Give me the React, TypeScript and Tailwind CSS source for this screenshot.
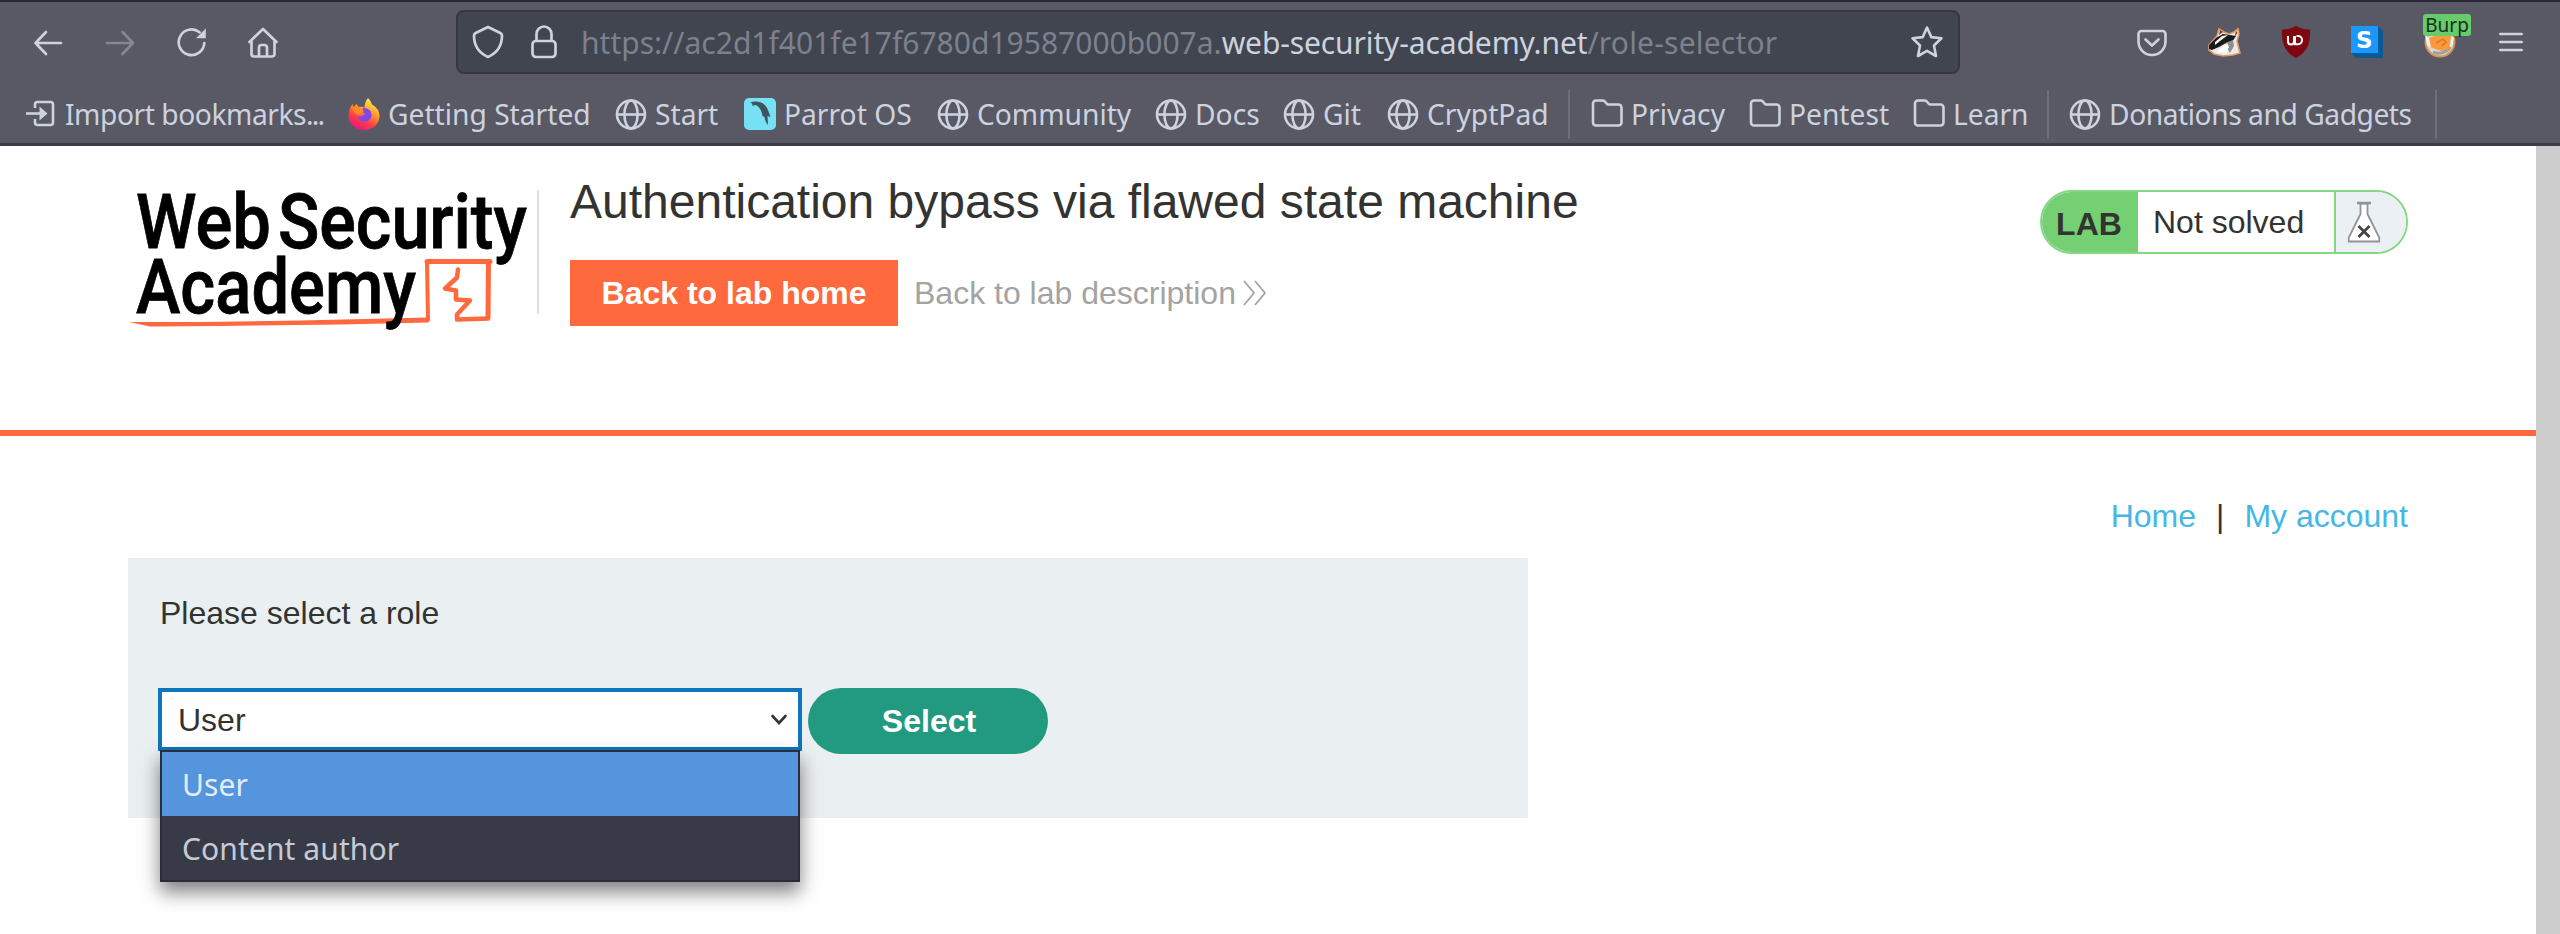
import React from "react";

const ui = "font-['Noto_Sans',sans-serif]";

function Globe() {
  return (
    <svg className="h-8 w-8 shrink-0" viewBox="0 0 32 32" fill="none" stroke="currentColor" strokeWidth="2.6">
      <circle cx="16" cy="16.5" r="14" />
      <ellipse cx="16" cy="16.5" rx="6.6" ry="14" />
      <path d="M2 16.500h28" />
    </svg>
  );
}

function Folder() {
  return (
    <svg className="h-8 w-8 shrink-0" viewBox="0 0 32 32" fill="none" stroke="currentColor" strokeWidth="2.6" strokeLinejoin="round">
      <path d="M2 24.500V5.500a3 3 0 0 1 3-3h6.500a3 3 0 0 1 2.300 1L16.500 6.500H27.500a3 3 0 0 1 3 3V24.500a3 3 0 0 1-3 3H5a3 3 0 0 1-3-3Z" />
    </svg>
  );
}

function ImportIcon() {
  return (
    <svg className="h-8 w-8 shrink-0" viewBox="-1 0 32 32" fill="none" stroke="currentColor" strokeWidth="2.6">
      <path d="M9 10V6.500a2.500 2.500 0 0 1 2.500-2.500H24.500a2.500 2.500 0 0 1 2.500 2.500V24.500a2.500 2.500 0 0 1-2.500 2.500H11.500A2.500 2.500 0 0 1 9 24.500V21" />
      <path d="M0 15.500h15" />
      <path d="M13.500 8.500l8 7-8 7Z" fill="currentColor" stroke="none" />
    </svg>
  );
}

function FirefoxIcon() {
  return (
    <svg className="h-8 w-8 shrink-0" viewBox="0 0 32 32">
      <defs>
        <linearGradient id="fx" x1="0.8" y1="0.05" x2="0.3" y2="1">
          <stop offset="0" stopColor="#fff44f" />
          <stop offset="0.35" stopColor="#ffa02e" />
          <stop offset="0.7" stopColor="#ff3b47" />
          <stop offset="1" stopColor="#e31587" />
        </linearGradient>
      </defs>
      <path d="M20 0c2 2 3 4 4 6.500C29 9.500 31.500 13 31.500 18c0 8-6.800 14-15.500 14S.5 26 .5 18c0-5 1.500-9 4-12l1 3 3-3 2 3c3-.5 5 0 6 1 0-4 1-7 3.500-10Z" fill="url(#fx)" />
      <path d="M15 10c6 0 8.500 3 8.500 7s-3 6.500-7 6.500-7-2.500-7-6c1 1 3 1.500 4.500.5 1-.8 3-1 3-2.500-1.500-.5-3.500-1.500-2-5.500Z" fill="#8245ea" />
      <path d="M4 9.500c2-1 6 0 8 2l4 1c-1 3-5 2-5 5-3-1-6-4-7-8Z" fill="#ff8a1f" />
    </svg>
  );
}

function ParrotIcon() {
  return (
    <svg className="h-8 w-8 shrink-0" viewBox="0 0 32 32">
      <rect width="32" height="32" rx="5" fill="#76e1f2" />
      <path d="M6 4.500c7-2.500 14-.5 17 5.500 2 4 2.500 7 3.500 9l-3-1 .5 9c-2-2-3-5-3.500-8l-2-1C18 13 15 8 11.500 7L8 8c1-1.500.5-2.500-2-3.500Z" fill="#3f5260" />
    </svg>
  );
}

type Mark = { label: React.ReactNode; w: string; icon: React.ReactNode };

const marks: Mark[] = [
  {
    label: (
      <span className="tracking-[-0.45px]">
        Import bookmarks<span className="tracking-[-1.8px]">...</span>
      </span>
    ),
    w: "w-[323px]",
    icon: <ImportIcon />,
  },
  { label: "Getting Started", w: "w-[267px]", icon: <FirefoxIcon /> },
  { label: "Start", w: "w-[129px]", icon: <Globe /> },
  { label: "Parrot OS", w: "w-[193px]", icon: <ParrotIcon /> },
  { label: "Community", w: "w-[218px]", icon: <Globe /> },
  { label: "Docs", w: "w-[128px]", icon: <Globe /> },
  { label: "Git", w: "w-[104px]", icon: <Globe /> },
  { label: "CryptPad", w: "w-[181px]", icon: <Globe /> },
];
const folders: Mark[] = [
  { label: "Privacy", w: "w-[158px]", icon: <Folder /> },
  { label: "Pentest", w: "w-[164px]", icon: <Folder /> },
  { label: "Learn", w: "w-[134px]", icon: <Folder /> },
];

function Bookmark({ label, w, icon }: Mark) {
  return (
    <div className={"flex shrink-0 items-center gap-[8px] whitespace-nowrap " + w}>
      {icon}
      <span>{label}</span>
    </div>
  );
}

function Divider() {
  return <div className="h-[49px] w-[2px] shrink-0 bg-[#6c6e7b]" />;
}

function NavBar() {
  return (
    <div className="flex h-20 items-center">
      <svg className="ml-[33px] h-[30px] w-[30px] shrink-0" viewBox="0 0 30 30" fill="none" stroke="currentColor" strokeWidth="2.7" strokeLinecap="round" strokeLinejoin="round">
        <path d="M28 16H2.500M13 5 2.500 16 13 27" />
      </svg>
      <svg className="ml-[42px] h-[30px] w-[30px] shrink-0 text-[#858894]" viewBox="0 0 30 30" fill="none" stroke="currentColor" strokeWidth="2.7" strokeLinecap="round" strokeLinejoin="round">
        <path d="M2 16H28M17.500 5 28 16 17.500 27" />
      </svg>
      <svg className="ml-[41px] h-8 w-8 shrink-0" viewBox="0 0 32 32" fill="none" stroke="currentColor" strokeWidth="2.7" strokeLinecap="round">
        <path d="M23.500 6.300A12.800 12.800 0 1 0 28.300 17" />
        <path d="M29.800 2.500v9.800H20Z" fill="currentColor" stroke="none" />
      </svg>
      <svg className="ml-[38px] h-8 w-8 shrink-0" viewBox="0 0 32 32" fill="none" stroke="currentColor" strokeWidth="2.7" strokeLinecap="round" strokeLinejoin="round">
        <path d="M3.500 16 17 3l13.500 13M5.500 15v13a2.500 2.500 0 0 0 2.500 2.500h18a2.500 2.500 0 0 0 2.500-2.500V15M13 30V21.500a2.500 2.500 0 0 1 2.500-2.500h3a2.500 2.500 0 0 1 2.500 2.500V30" />
      </svg>
      <div className="ml-[178px] flex h-16 w-[1504px] shrink-0 items-center rounded-[8px] border-2 border-[#343742] bg-[#404550]">
        <svg className="ml-[14px] h-[34px] w-8 shrink-0" viewBox="0 0 32 34" fill="none" stroke="currentColor" strokeWidth="2.7" strokeLinejoin="round">
          <path d="M16 2 28.300 8c1.200.6 1.700 1 1.700 2.500C30 20 25 28 16 32 7 28 2 20 2 10.500 2 9 2.500 8.600 3.700 8Z" />
        </svg>
        <svg className="ml-[27px] h-[34px] w-[26px] shrink-0" viewBox="0 0 26 34" fill="none" stroke="currentColor" strokeWidth="2.7">
          <rect x="1.500" y="16" width="23" height="16" rx="3.500" />
          <path d="M5.500 16V9a7.500 7.500 0 0 1 15 0v7" />
        </svg>
        <div className="ml-[24px] w-[1329px] whitespace-nowrap text-[30px] text-[#7d818d]">
          <span className="tracking-[0.01px]">https://ac2d1f401fe17f6780d19587000b007a.</span>
          <span className="tracking-[-0.12px] text-[#ccd2de]">web-security-academy.net</span>
          <span className="tracking-[0.2px]">/role-selector</span>
        </div>
        <svg className="h-[34px] w-[34px] shrink-0" viewBox="0 0 34 34" fill="none" stroke="currentColor" strokeWidth="2.6" strokeLinejoin="round">
          <path d="m17 2.500 4.300 9.600 10.200 1.200-7.500 7.200 2 10.500L17 25.800 8 31l2-10.500-7.500-7.200 10.200-1.200Z" />
        </svg>
      </div>
      <svg className="ml-[177px] h-[30px] w-[30px] shrink-0" viewBox="0 0 30 30" fill="none" stroke="currentColor" strokeWidth="2.6" strokeLinecap="round" strokeLinejoin="round">
        <path d="M4.500 4h21a3 3 0 0 1 3 3v7.500a13.500 13.500 0 0 1-27 0V7a3 3 0 0 1 3-3Z" />
        <path d="m8.500 12.500 6.500 6 6.500-6" />
      </svg>
      <svg className="ml-[40px] h-8 w-[34px] shrink-0" viewBox="0 0 34 32">
        <path d="M2 19 10 10 12 3l5 3 5 2 5-2 4-3 1 5-2 7 3 12-7 2-10 1-9-2-5-4Z" fill="#eceae8" stroke="#dc9a68" strokeWidth="1.600" />
        <path d="M2 19 9 12l7-4 7 1 6 1-4 6-6 1-7 4-7 3-3-1Z" fill="#1a1a1c" />
        <path d="M8 16 15 10l6-1-8 6-5 4Z" fill="#f6f6f6" />
        <path d="m18 17 8-3 1 6-4 7-3-5Z" fill="#8f8f93" />
        <path d="M12 24 20 17l2 4-3 6-9-1Z" fill="#fff" />
        <path d="m13 4 3 2-4 3Z" fill="#7b3c22" />
        <path d="m29 5 1.500 2-3 4Z" fill="#7b3c22" />
      </svg>
      <svg className="ml-[40px] h-8 w-[30px] shrink-0" viewBox="0 0 30 32">
        <path d="M15 0c5 3 10 3.500 14 3.500C30 18 25 27 15 32 5 27 0 18 1 3.500 5 3.500 10 3 15 0Z" fill="#800610" />
        <path d="M7 10v5.500a3 3 0 0 0 6 0V10M14 10v8.200h3a4.100 4.100 0 0 0 0-8.200h-1.500" fill="none" stroke="#fff" strokeWidth="2" />
      </svg>
      <div className="relative ml-[40px] h-8 w-8 shrink-0">
        <svg className="h-8 w-8" viewBox="0 0 32 32">
          <path d="M0 27 5 32H32V5L27 0Z" fill="#0b5a96" />
          <rect width="27" height="27" fill="#1b98fb" />
        </svg>
        <span className="absolute left-[5px] top-[-1px] font-['DejaVu_Sans',sans-serif] text-[23px] font-bold leading-[30px] text-white">S</span>
      </div>
      <div className="relative ml-[41px] h-8 w-8 shrink-0">
        <svg className="h-8 w-8" viewBox="0 0 32 32">
          <circle cx="16" cy="16" r="14.500" fill="#d9d4cf" stroke="#d99250" strokeWidth="2" />
          <path d="M9 26a13 12 0 0 0 17-5" fill="none" stroke="#9b9ea6" strokeWidth="3" />
          <path d="M5 12 16 8l11 2-2 13-8 2-11-4Z" fill="#fb9a3c" />
          <path d="M1 9l4 3 2 9-4-2ZM28 10l2 2-2 8-2 1Z" fill="#f6f2ee" />
          <path d="m12 17 7-4 3 3-4 4" fill="none" stroke="#e07d28" strokeWidth="1.800" />
        </svg>
        <span className="absolute left-[-1px] top-[-12px] flex h-[22px] w-[48px] items-center justify-center rounded-[3px] bg-[#67cb6c] text-[19px] leading-none text-[#16301a]">Burp</span>
      </div>
      <svg className="ml-[43px] h-[22px] w-6 shrink-0" viewBox="0 0 24 22" fill="none" stroke="currentColor" strokeWidth="2.6" strokeLinecap="round">
        <path d="M1.300 3h21.400M1.300 11h21.400M1.300 19h21.400" />
      </svg>
    </div>
  );
}

function BrowserChrome() {
  return (
    <div className={"h-[146px] w-full border-b-[3px] border-t-[2px] border-b-[#3a3d49] border-t-[#282a33] bg-[#585965] text-[#ccd2de] " + ui}>
      <NavBar />
      <div className="flex h-[61px] items-center pl-[25px] pt-[3px] text-[28.2px]">
        {marks.map((m, i) => (
          <Bookmark key={i} {...m} />
        ))}
        <Divider />
        <div className="flex pl-[21px]">
          {folders.map((m, i) => (
            <Bookmark key={i} {...m} />
          ))}
        </div>
        <Divider />
        <div className="pl-[20px] tracking-[-0.45px]">
          <Bookmark label="Donations and Gadgets" w="w-[366px]" icon={<Globe />} />
        </div>
        <Divider />
      </div>
    </div>
  );
}

function Logo() {
  return (
    <svg className="h-[170px] w-[419px] shrink-0 overflow-visible" viewBox="118 165 419 170">
      <g fill="none" stroke="#ff693d" strokeLinejoin="round" strokeLinecap="round">
        <path d="M428 320 427 262" strokeWidth="4" />
        <path d="M427 261.500h63" strokeWidth="5" />
        <path d="M488.500 262 488 318" strokeWidth="5" />
        <path d="M488 318.500l-31 1v-5l13-14-14-1v-9l-11-2 12-11 1-8" strokeWidth="4.500" />
      </g>
      <path d="M129 322 200 322 300 320.500 428 317.500v5L340 324.500l-120 1.500-70 .5Z" fill="#ff693d" />
      <g className="font-['Roboto',sans-serif]" fontSize="76" fontWeight="500" fill="#000" stroke="#000" strokeWidth="0.8">
        <text x="136" y="247.500" textLength="135" lengthAdjust="spacingAndGlyphs">Web</text>
        <text x="278" y="247.500" textLength="249" lengthAdjust="spacingAndGlyphs">Security</text>
        <text x="136" y="312.500" textLength="280" lengthAdjust="spacingAndGlyphs">Academy</text>
      </g>
    </svg>
  );
}

function LabHeader() {
  return (
    <header className="flex h-[290px] items-start border-b-[6px] border-[#ff693d] pl-[118px] pr-[128px]">
      <div className="flex pt-[19px]">
        <Logo />
        <div className="mt-[25px] h-[124px] w-[2px] bg-[#dfdfdf]" />
      </div>
      <div className="ml-[31px] flex flex-col">
        <h2 className="mt-[28px] h-[86px] whitespace-nowrap text-[48px] leading-[55px]">Authentication bypass via flawed state machine</h2>
        <div className="flex h-[66px] items-center">
          <a className="flex h-[66px] w-[328px] items-center justify-center whitespace-nowrap bg-[#ff693d] text-[32px] font-bold text-white">Back to lab home</a>
          <a className="ml-4 flex items-center gap-[6px] whitespace-nowrap text-[32px] text-[#a3a3a3]">
            Back to lab description
            <svg className="h-[26px] w-[26px]" viewBox="0 0 26 26" fill="none" stroke="currentColor" strokeWidth="1.800">
              <path d="m2 1 10 12L2 25M13 1l10 12-10 12" />
            </svg>
          </a>
        </div>
      </div>
      <div className="ml-auto mt-[44px] flex h-16 w-[368px] overflow-hidden rounded-full border-2 border-[#85d783] text-[32px]">
        <div className="flex w-24 items-center justify-center bg-[#75cf73] pr-[2px] pt-1 font-bold">LAB</div>
        <div className="flex w-[196px] items-center whitespace-nowrap pl-[15px]">Not solved</div>
        <div className="flex flex-1 items-center border-l-2 border-[#85d783] bg-[#eaf0f3] pl-[11px]">
          <svg className="h-[42px] w-[34px]" viewBox="0 0 34 42" fill="#fff" stroke="#949494" strokeWidth="1.800">
            <path d="M13.500 2.500V13L1.800 36.500V40.500H32.200V36.500L20.500 13V2.500Z" />
            <path d="M10 2h14" strokeWidth="2.400" />
            <path d="m11.500 25 11 11M22.500 25l-11 11" stroke="#454545" strokeWidth="2.800" />
          </svg>
        </div>
      </div>
    </header>
  );
}

function RoleSelect() {
  return (
    <div className="relative h-[63px] w-[644px]">
      <div className="flex h-[63px] w-[644px] items-center justify-between border-4 border-[#0d77bd] bg-white pl-4 pr-[10px] text-[32px]">
        <span>User</span>
        <svg className="h-3 w-[18px]" viewBox="0 0 18 12" fill="none" stroke="#333" strokeWidth="2.6" strokeLinecap="round">
          <path d="m2.500 2 6.500 7L15.500 2" />
        </svg>
      </div>
      <ul className={"absolute left-[2px] top-[62px] w-[640px] border-2 border-[#2a2c37] bg-[#383b47] text-[30px] tracking-[0.1px] text-[#c5cad3] shadow-[0_10px_18px_rgba(0,0,0,0.5)] " + ui}>
        <li className="flex h-16 items-center bg-[#5595de] pl-[20px] text-[#e4edf8]">User</li>
        <li className="flex h-16 items-center pl-[20px]">Content author</li>
      </ul>
    </div>
  );
}

export default function App() {
  return (
    <div className="flex h-[934px] w-[2560px] flex-col overflow-hidden bg-white font-['Liberation_Sans',sans-serif] text-[#333332]">
      <BrowserChrome />
      <div className="flex flex-1">
        <main className="flex w-[2536px] flex-col">
          <LabHeader />
          <nav className="flex h-[122px] items-end justify-end pb-[24px] pr-[128px] text-[32px] leading-[36px] text-[#44b7e6]">
            <a>Home</a>
            <span className="ml-[20px] mr-[20px] text-[#333332]">|</span>
            <a>My account</a>
          </nav>
          <section className="ml-[128px] h-[260px] w-[1400px] bg-[#eaeff2] pl-[30px] pt-[37px]">
            <p className="h-[93px] pl-[2px] text-[32px] leading-[36px]">Please select a role</p>
            <div className="flex gap-[6px]">
              <RoleSelect />
              <button className="h-[66px] w-[240px] rounded-full bg-[#229a7f] pl-[2px] text-[32px] font-bold text-white">Select</button>
            </div>
          </section>
        </main>
        <div className="w-6 bg-[#cdcdcd]" />
      </div>
    </div>
  );
}
